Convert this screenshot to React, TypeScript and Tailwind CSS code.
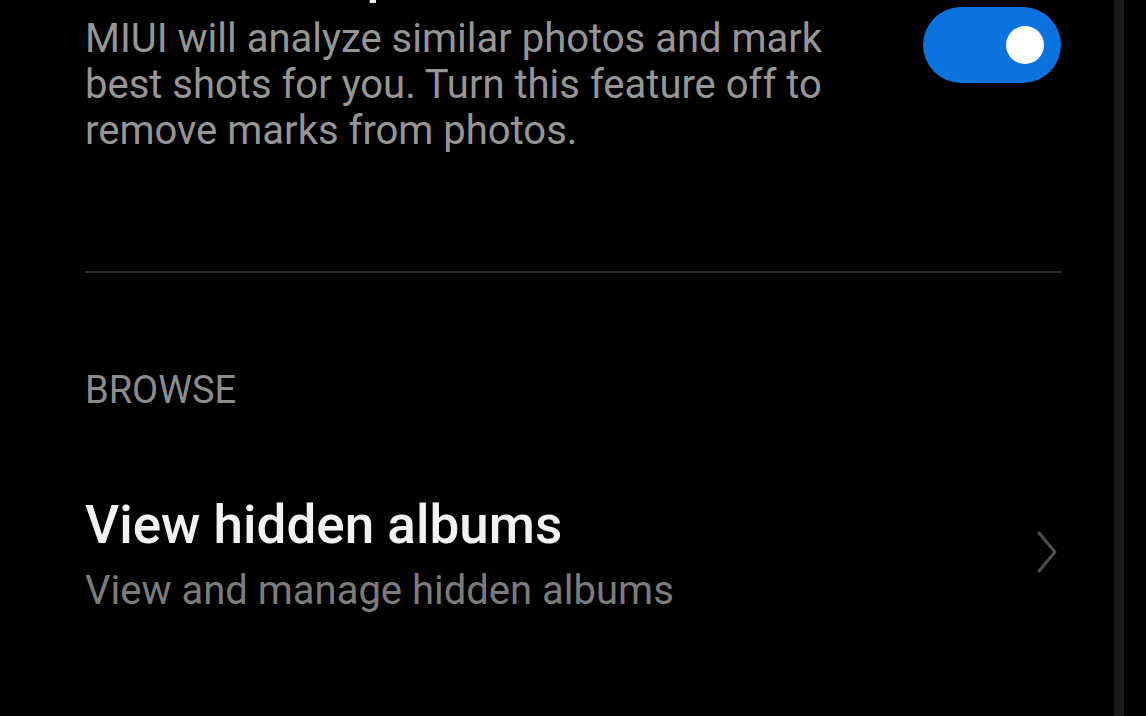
import { useState } from 'react';

function Toggle({ on, onChange }: { on: boolean; onChange: (v: boolean) => void }) {
  return (
    <button
      type="button"
      role="switch"
      aria-checked={on}
      onClick={() => onChange(!on)}
      className={`flex h-[76px] w-[138px] shrink-0 items-center rounded-full px-[17px] ${
        on ? 'justify-end bg-[#0b72df]' : 'justify-start bg-[#3a3a3a]'
      }`}
    >
      <span className="block h-[38px] w-[38px] rounded-full bg-white" />
    </button>
  );
}

export default function App() {
  const [bestShots, setBestShots] = useState(true);

  return (
    <div
      className="flex h-[716px] w-[1146px] overflow-hidden bg-black"
      style={{ fontFamily: 'Roboto, "Noto Sans", sans-serif' }}
    >
      <div className="flex w-[1114px] flex-col pl-[85px] pr-[53px]">
        <div className="-mt-[56px] flex items-start justify-between">
          <div className="w-[790px]">
            <div className="text-[53px] leading-[60px] font-medium text-[#f2f2f2]">
              Mark finest photos
            </div>
            <p className="mt-[12px] text-[40px] leading-[46px] text-[#969696]">
              MIUI will analyze similar photos and mark best shots for you. Turn this feature off to
              remove marks from photos.
            </p>
          </div>
          <div className="mt-[63px]">
            <Toggle on={bestShots} onChange={setBestShots} />
          </div>
        </div>

        <div className="mt-[117px] h-[2px] bg-[#2c2c2c]" />

        <div className="mt-[95px] text-[38px] leading-[44px] text-[#8c8c8c]">BROWSE</div>

        <button type="button" className="mt-[83px] flex items-center justify-between text-left">
          <div>
            <div className="text-[53px] leading-[60px] font-medium text-[#f2f2f2]">
              View hidden albums
            </div>
            <div className="mt-[13px] text-[40px] leading-[46px] text-[#7c7c7c]">
              View and manage hidden albums
            </div>
          </div>
          <svg width="22" height="42" viewBox="0 0 22 42" className="mr-[3px] mb-[6px]">
            <polyline
              points="3,2 19,21 3,40"
              fill="none"
              stroke="#4d4d4d"
              strokeWidth="3"
              strokeLinecap="round"
              strokeLinejoin="round"
            />
          </svg>
        </button>
      </div>
      <div className="w-[10px] bg-[#1a1a1a]" />
    </div>
  );
}
